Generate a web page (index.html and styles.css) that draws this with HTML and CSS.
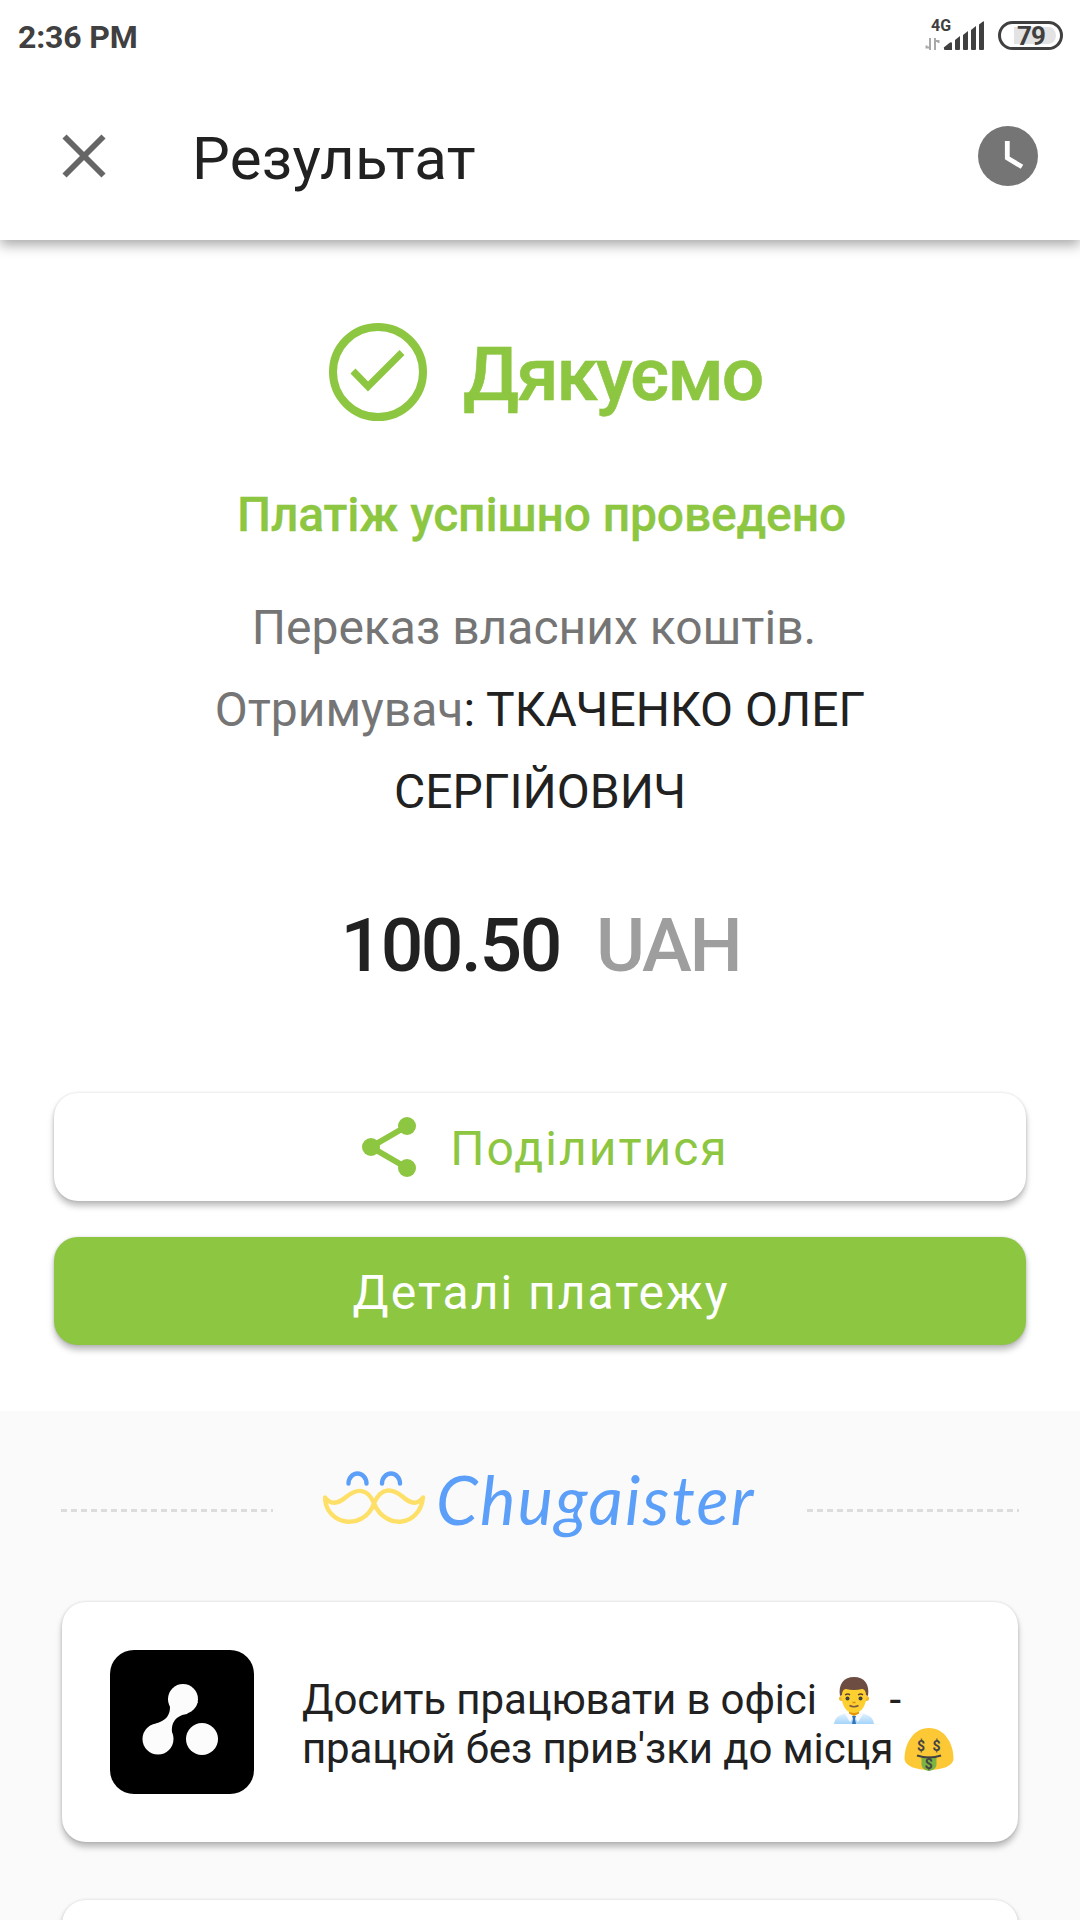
FILE: index.html
```html
<!DOCTYPE html>
<html lang="uk">
<head>
<meta charset="utf-8">
<title>Результат</title>
<link rel="stylesheet" href="styles.css">
</head>
<body>
<div class="screen">
  <header class="top">
    <div class="status">
      <span class="time">2:36 PM</span>
      <div class="indicators">
        <div class="network">
          <span class="net-type">4G</span>
          <svg class="signal" width="60" height="32" viewBox="0 0 60 32">
            <path d="M6 19v12M6 28.500H2.500v-2M11 31V19M11 22h3.500v2" fill="none" stroke="#a9a9a9" stroke-width="2"/>
            <g fill="#404040"><path d="M20 29.500q-1-1 1-2l5-4q2-1 2 1v6.500h-7q-1 0-1-1z"/><path d="M31 21l5-4v13q0 1-1 1h-3q-1 0-1-1z"/><path d="M39 16l5-4v18q0 1-1 1h-3q-1 0-1-1z"/><path d="M47 11l5-4v23q0 1-1 1h-3q-1 0-1-1z"/><path d="M55 5.500l4-3q1-.5 1 .5v27q0 1-1 1h-3q-1 0-1-1z"/></g>
          </svg>
        </div>
        <div class="battery"><span class="level">79</span></div>
      </div>
    </div>
    <div class="appbar">
      <svg class="close" width="72" height="72" viewBox="0 0 72 72"><path d="M16.500 16.500L55.500 55.500M55.500 16.500L16.500 55.500" stroke="#666" stroke-width="5.800"/></svg>
      <h1 class="title">Результат</h1>
      <svg class="clock" width="60" height="60" viewBox="0 0 60 60"><circle cx="30" cy="30" r="30" fill="#757575"/><path d="M29.300 15v17l14.700 8.800" fill="none" stroke="#fff" stroke-width="4.800"/></svg>
    </div>
  </header>

  <main class="result">
    <div class="thanks">
      <svg class="check" width="98" height="98" viewBox="0 0 98 98" fill="none" stroke="#8dc641"><circle cx="49" cy="49" r="45" stroke-width="8"/><path d="M24 48l15 15.400L73 29.500" stroke-width="7"/></svg>
      <h2 class="thanks-text">Дякуємо</h2>
    </div>
    <p class="success">Платіж успішно проведено</p>
    <div class="details">
      <p class="purpose">Переказ власних коштів.</p>
      <p class="receiver"><span class="label">Отримувач</span>: ТКАЧЕНКО ОЛЕГ<br>СЕРГІЙОВИЧ</p>
    </div>
    <div class="amount"><span class="sum">100.50</span><span class="currency">UAH</span></div>
    <div class="actions">
      <div class="button share">
        <svg class="share-icon" width="54" height="60" viewBox="0 0 54 60"><path d="M45 9L9 30l36 21" fill="none" stroke="#8dc641" stroke-width="6"/><g fill="#8dc641"><circle cx="45" cy="9" r="9"/><circle cx="9" cy="30" r="9"/><circle cx="45" cy="51" r="9"/></g></svg>
        <span class="share-text">Поділитися</span>
      </div>
      <div class="button primary"><span class="primary-text">Деталі платежу</span></div>
    </div>
  </main>

  <section class="promo">
    <div class="brand-row">
      <div class="dashes"></div>
      <div class="brand">
        <svg class="moustache" width="106" height="60" viewBox="0 0 106 60" fill="none" stroke-linecap="round" stroke-linejoin="round">
          <path d="M25.500 16.500a9 10 0 0 1 18 0M59 16.500a9 10 0 0 1 18 0" stroke="#5c9ff8" stroke-width="4.400"/>
          <path d="M51 36.500C45 21 34 21 23 30 14 38 7 37 2 30.500 3 59 41 64 51 36.500 63 64 97 59 100 30.500 95 37 89 38 80 30 69 21 58 20 51 36.500" stroke="#fee069" stroke-width="4.400"/>
        </svg>
        <span class="wordmark">Chugaister</span>
      </div>
      <div class="dashes"></div>
    </div>
    <article class="card">
      <svg class="app-icon" width="144" height="144" viewBox="0 0 144 144"><rect width="144" height="144" rx="24"/><g fill="#fcfcfc"><circle cx="73" cy="49" r="15"/><circle cx="48" cy="89" r="15.500"/><circle cx="92" cy="89" r="16"/><path d="M58 48C62 58 60 67 52 71C46 74 44 74 40 76L63 87C60 76 63 66 77 64L88 52z"/></g></svg>
      <p class="offer"><span>Досить працювати в офісі <svg class="emoji man" width="40" height="47" viewBox="0 0 40 47"><defs><linearGradient id="shirt" x1="0" y1="0" x2="0" y2="1"><stop offset="0" stop-color="#e6f4ff"/><stop offset="1" stop-color="#a5d4fa"/></linearGradient></defs><path d="M0 47C1 38 9 36 20 36s19 2 20 11z" fill="url(#shirt)"/><path d="M15 31h10v6l-5 3-5-3z" fill="#e59600"/><path d="M14 36l6 3-4 6-5-8zM26 36l-6 3 4 6 5-8z" fill="#f7fbff"/><path d="M18 39h4l-1 3 1 5h-4l1-5z" fill="#3174ba"/><circle cx="7.500" cy="21.500" r="2.500" fill="#f4b72b"/><circle cx="32.500" cy="21.500" r="2.500" fill="#f4b72b"/><path d="M7 13C7 4 13 2 20 2s13 2 13 12c0 12-4 22-13 22S7 27 7 13z" fill="#fdcf2f"/><path d="M6 19C4 7 10 0 20 0s16 7 14 19l-2-1c0-4-2-6-4-6q-8 2-16 0c-2 0-4 2-4 6z" fill="#6d4c41"/><path d="M11 18q3-2 5 0M24 18q3-2 5 0" fill="none" stroke="#5d4037" stroke-width="1.300"/><circle cx="13.500" cy="21.500" r="2" fill="#404040"/><circle cx="26.500" cy="21.500" r="2" fill="#404040"/><path d="M18.500 25.500h3" stroke="#d78c18" stroke-width="1.500"/><path d="M15.500 28.500q4.500 2.500 9 0" fill="none" stroke="#795548" stroke-width="1.500"/></svg> <span class="dash">-</span></span><span>працюй без прив'зки до місця <svg class="emoji money" width="50" height="43" viewBox="0 0 50 43"><path d="M25 0C9 0 .5 16 .5 31 1 38 12 42 25 42s24-4 24.500-11C49.500 16 41 0 25 0z" fill="#fcc836"/><path d="M17.500 29h15v7c0 9-15 9-15 0z" fill="#7cb342"/><path d="M13 27.500q12 4 24 0" fill="none" stroke="#434343" stroke-width="2"/><g fill="#434343" text-anchor="middle"><text class="dollar" x="17" y="22.500">$</text><text class="dollar" x="32.500" y="22.500">$</text><text class="dollar" x="24.800" y="41">$</text></g></svg></span></p>
    </article>
    <article class="card next"></article>
  </section>
</div>
</body>
</html>
```
FILE: styles.css
```css
* { box-sizing: border-box; }
body { margin: 0; background: #fff; font-family: Roboto, "Liberation Sans", sans-serif; color: #212121; }
h1, h2, p { margin: 0; font-weight: 400; }
svg { display: block; flex: none; }
span { white-space: nowrap; }
.screen { width: 1080px; height: 1920px; overflow: hidden; display: flex; flex-direction: column; }

.top { flex: none; height: 240px; background: #fff; box-shadow: 0 5px 12px rgba(0, 0, 0, .34); }
.status { height: 72px; padding: 0 17px 0 18px; display: flex; justify-content: space-between; align-items: flex-start; color: #404040; }
.time { font-size: 32px; line-height: 74px; font-weight: 700; letter-spacing: -.15px; }
.indicators { display: flex; gap: 15px; padding-top: 19px; }
.network { position: relative; left: 1px; width: 60px; height: 32px; }
.net-type { position: absolute; left: 7px; top: -2px; font-size: 16px; line-height: 18px; font-weight: 700; }
.battery { width: 65px; height: 29px; margin-top: 2px; padding: 3px 4px 3px 13px; border: 3px solid #404040; border-radius: 15px; background: #e3e3e3 content-box; display: flex; align-items: center; }
.level { margin-left: 3px; padding-top: 1px; font-size: 26px; line-height: 17px; font-weight: 700; letter-spacing: -1px; }
.appbar { height: 168px; padding: 0 42px 0 48px; display: flex; align-items: center; }
.title { flex: 1; margin-left: 72px; font-size: 60px; line-height: 70px; padding-top: 5px; letter-spacing: .25px; }

.result { flex: none; height: 1171px; display: flex; flex-direction: column; align-items: center; }
.thanks { align-self: flex-start; height: 98px; margin: 83px 0 0 329px; display: flex; align-items: center; gap: 36px; }
.thanks-text { font-size: 75px; line-height: 88px; padding-top: 4px; font-weight: 500; letter-spacing: -2.1px; color: #8dc641; -webkit-text-stroke: .6px #8dc641; }
.success { margin-top: 64px; padding-left: 3px; font-size: 48px; line-height: 60px; font-weight: 500; letter-spacing: -.15px; color: #8dc641; -webkit-text-stroke: .3px #8dc641; }
.details { margin-top: 42px; text-align: center; font-size: 48px; line-height: 82px; }
.purpose { padding-right: 12px; }
.purpose, .label { color: #757575; }
.amount { margin-top: 67px; padding-left: 1px; display: flex; gap: 36px; font-size: 75px; line-height: 90px; font-weight: 500; letter-spacing: -2.4px; }
.currency { color: #9e9e9e; letter-spacing: -2.2px; }
.actions { width: 972px; margin-top: 103px; display: flex; flex-direction: column; gap: 36px; }
.button { height: 108px; border-radius: 24px; display: flex; justify-content: center; align-items: center; font-size: 48px; letter-spacing: 2px; box-shadow: 0 5px 6px rgba(0, 0, 0, .26), 0 0 3px rgba(0, 0, 0, .14); }
.button span { padding-top: 3px; }
.share { gap: 34px; padding-left: 11px; color: #8dc641; }
.primary { padding-left: 2px; background: #8dc641; color: #fff; }

.promo { flex: none; height: 509px; padding: 0 61px; background: #fafafa; }
.brand-row { height: 191px; display: flex; justify-content: space-between; }
.dashes { width: 212px; height: 3px; margin-top: 98px; background: repeating-linear-gradient(90deg, #dcdcdc 0 6px, transparent 6px 10px); }
.brand { width: 434px; display: flex; }
.moustache { margin-top: 56px; }
.wordmark { font-family: Lato, sans-serif; font-style: italic; font-size: 67px; line-height: 80px; letter-spacing: 2.1px; margin: 48px 0 0 7px; color: #5c9ff8; }
.card { height: 240px; margin: 0 1px; padding: 0 48px; border-radius: 24px; background: #fff; display: flex; align-items: center; gap: 48px; box-shadow: 0 5px 6px rgba(0, 0, 0, .26), 0 0 3px rgba(0, 0, 0, .14); }
.next { margin-top: 58px; }
.offer { font-size: 42px; line-height: 49px; padding-top: 3px; letter-spacing: -.12px; }
.offer > span { display: block; height: 49px; }
.emoji { display: inline-block; }
.man { margin: 0 5px 0 7px; vertical-align: -10px; }
.money { vertical-align: -8px; }
.dollar { font: 700 14px Roboto, sans-serif; }
```
